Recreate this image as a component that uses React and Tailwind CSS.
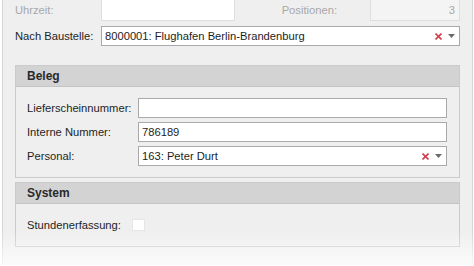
import React from 'react'

const font = { fontFamily: '"Liberation Sans", Arial, sans-serif' }

function ClearIcon() {
  return (
    <svg width="7" height="7" viewBox="0 0 7 7" className="shrink-0">
      <path d="M0.5 0.5 L6.5 6.5 M6.5 0.5 L0.5 6.5" stroke="#d2404f" strokeWidth="1.6" />
    </svg>
  )
}

function Arrow() {
  return (
    <svg width="7" height="4" viewBox="0 0 7 4" className="shrink-0">
      <path d="M0 0 H7 L3.5 4 Z" fill="#6b6b6b" />
    </svg>
  )
}

function Combo({ value }) {
  return (
    <div className="flex-1 h-[20px] bg-white border border-[#a9a9a9] flex items-center pl-[3px] pr-[4px]">
      <span className="flex-1 truncate text-[#1e1e1e]">{value}</span>
      <ClearIcon />
      <span className="w-[6px]" />
      <Arrow />
    </div>
  )
}

function TextBox({ value }) {
  return (
    <div className="flex-1 h-[20px] bg-white border border-[#a9a9a9] flex items-center pl-[3px] text-[#1e1e1e]">
      {value}
    </div>
  )
}

function Group({ title, children }) {
  return (
    <div className="mr-[12px] border border-[#cbcbcb]">
      <div className="h-[21px] bg-[#d3d3d3] border-b border-[#c4c4c4] flex items-center pl-[11px] font-bold text-[12px] text-[#2a2a2a]">
        {title}
      </div>
      {children}
    </div>
  )
}

export default function App() {
  return (
    <div className="relative w-[474px] h-[266px] overflow-hidden bg-white text-[11.2px]" style={font}>
      <div className="ml-[2px] w-[471px] h-full bg-[#efefef] border-l border-r border-[#d6d6d6] pl-[12px]">
        <div className="flex items-center h-[22px] -mt-[1px]">
          <div className="w-[86px] text-[#a8a8a8]">Uhrzeit:</div>
          <div className="w-[134px] h-[22px] bg-white border border-[#dedede]" />
          <div className="w-[102px] text-right text-[#a8a8a8]">Positionen:</div>
          <div className="ml-[33px] w-[90px] h-[22px] bg-[#f4f4f4] border border-[#dedede] flex items-center justify-end pr-[4px] text-[#a8a8a8]">3</div>
        </div>
        <div className="flex items-center mt-[5px] mr-[12px]">
          <div className="w-[86px] text-[#1e1e1e]">Nach Baustelle:</div>
          <Combo value="8000001: Flughafen Berlin-Brandenburg" />
        </div>

        <div className="mt-[19px]">
          <Group title="Beleg">
            <div className="flex flex-col gap-[4px] pt-[11px] pb-[11px] pl-[11px] pr-[12px]">
              <div className="flex items-center">
                <div className="w-[111px] text-[#1e1e1e]">Lieferscheinnummer:</div>
                <TextBox value="" />
              </div>
              <div className="flex items-center">
                <div className="w-[111px] text-[#1e1e1e]">Interne Nummer:</div>
                <TextBox value="786189" />
              </div>
              <div className="flex items-center">
                <div className="w-[111px] text-[#1e1e1e]">Personal:</div>
                <Combo value="163: Peter Durt" />
              </div>
            </div>
          </Group>
        </div>

        <div className="mt-[4px]">
          <Group title="System">
            <div className="flex items-center h-[42px] pl-[11px]">
              <div className="w-[105px] text-[#1e1e1e]">Stundenerfassung:</div>
              <div className="w-[13px] h-[12px] bg-white border border-[#e6e6e6]" />
            </div>
          </Group>
        </div>
      </div>
      <div className="absolute left-0 right-0 bottom-0 h-[34px] bg-gradient-to-b from-white/0 to-white/80 pointer-events-none" />
    </div>
  )
}
